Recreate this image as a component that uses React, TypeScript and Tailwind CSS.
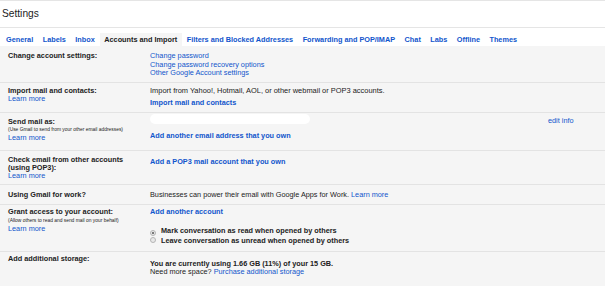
const tabs = [
    "General",
    "Labels",
    "Inbox",
    "Accounts and Import",
    "Filters and Blocked Addresses",
    "Forwarding and POP/IMAP",
    "Chat",
    "Labs",
    "Offline",
    "Themes",
]

const link = "text-[#15c]"
const row = "flex border-b border-[#e3e3e3]"
const left = "w-[150px] shrink-0 pl-[8px]"

function Radio({ checked }: { checked?: boolean }) {
    return (
        <span className="inline-flex items-center justify-center w-[6px] h-[6px] mr-[5px] rounded-full border border-[#b5b5b5] bg-[#e8e8e8] align-[-0.5px]">
            {checked && <span className="w-[2px] h-[2px] rounded-full bg-[#555]" />}
        </span>
    )
}

export default function App() {
    return (
        <div className="w-[605px] h-[286px] overflow-hidden bg-white border-t border-[#e5e5e5] text-[#222] font-['Liberation_Sans',Arial,sans-serif] text-[7.3px] leading-[8.3px]">
            <div className="h-[27px] border-b border-[#e5e5e5] pl-[2px] pt-[7px]">
                <h1 className="text-[10.2px] leading-[12px] font-normal">Settings</h1>
            </div>

            <div className="flex h-[18px] pt-[5px] pl-[1.25px]">
                {tabs.map((t) => (
                    <div
                        key={t}
                        className={
                            t === "Accounts and Import"
                                ? "px-[4.75px] h-[13px] leading-[13px] font-bold bg-[#f5f5f5] text-[#222]"
                                : "px-[4.75px] h-[13px] leading-[13px] font-bold text-[#15c]"
                        }
                    >
                        {t}
                    </div>
                ))}
            </div>

            <div className="bg-[#f5f5f5] h-[240px]">
                {/* change account settings */}
                <div className={`${row} h-[37px]`}>
                    <div className={`${left} pt-[6.4px] font-bold`}>Change account settings:</div>
                    <div className={`pt-[6.4px] flex flex-col ${link}`}>
                        <span>Change password</span>
                        <span>Change password recovery options</span>
                        <span>Other Google Account settings</span>
                    </div>
                </div>

                {/* import */}
                <div className={`${row} h-[30px]`}>
                    <div className={`${left} pt-[3.9px]`}>
                        <div className="font-bold">Import mail and contacts:</div>
                        <div className={link}>Learn more</div>
                    </div>
                    <div className="pt-[3.9px] text-[7.45px]">
                        <div>Import from Yahoo!, Hotmail, AOL, or other webmail or POP3 accounts.</div>
                        <div className={`mt-[4px] text-[7.3px] font-bold ${link}`}>Import mail and contacts</div>
                    </div>
                </div>

                {/* send mail as */}
                <div className={`${row} h-[38px]`}>
                    <div className={`${left} pt-[4.7px]`}>
                        <div className="font-bold">Send mail as:</div>
                        <div className="text-[4.9px] leading-[8.3px]">(Use Gmail to send from your other email addresses)</div>
                        <div className={link}>Learn more</div>
                    </div>
                    <div className="flex-1">
                        <div className="w-[160px] h-[10px] mt-[0.5px] bg-white rounded-[5px] blur-[0.6px]" />
                        <div className={`mt-[8.2px] font-bold ${link}`}>Add another email address that you own</div>
                    </div>
                    <div className={`w-[57px] shrink-0 pt-[4.4px] ${link}`}>edit info</div>
                </div>

                {/* check email */}
                <div className={`${row} h-[34px]`}>
                    <div className={`${left} pt-[4.7px]`}>
                        <div className="font-bold">
                            Check email from other accounts
                            <br />
                            (using POP3):
                        </div>
                        <div className={link}>Learn more</div>
                    </div>
                    <div className={`pt-[7.4px] font-bold ${link}`}>Add a POP3 mail account that you own</div>
                </div>

                {/* gmail for work */}
                <div className={`${row} h-[20px]`}>
                    <div className={`${left} pt-[6px] font-bold`}>Using Gmail for work?</div>
                    <div className="pt-[6px]">
                        Businesses can power their email with Google Apps for Work. <span className={link}>Learn more</span>
                    </div>
                </div>

                {/* grant access */}
                <div className={`${row} h-[47px]`}>
                    <div className={`${left} pt-[3.4px]`}>
                        <div className="font-bold">Grant access to your account:</div>
                        <div className="text-[4.9px] leading-[8.3px]">(Allow others to read and send mail on your behalf)</div>
                        <div className={link}>Learn more</div>
                    </div>
                    <div className="pt-[3.4px]">
                        <div className={`font-bold ${link}`}>Add another account</div>
                        <div className="mt-[9.4px] font-bold leading-[9px]">
                            <div>
                                <Radio checked />
                                Mark conversation as read when opened by others
                            </div>
                            <div>
                                <Radio />
                                Leave conversation as unread when opened by others
                            </div>
                        </div>
                    </div>
                </div>

                {/* storage */}
                <div className="flex h-[34px]">
                    <div className={`${left} pt-[2.8px] font-bold`}>Add additional storage:</div>
                    <div className="pt-[7.6px]">
                        <div className="font-bold">You are currently using 1.66 GB (11%) of your 15 GB.</div>
                        <div>
                            Need more space? <span className={link}>Purchase additional storage</span>
                        </div>
                    </div>
                </div>
            </div>
        </div>
    )
}
